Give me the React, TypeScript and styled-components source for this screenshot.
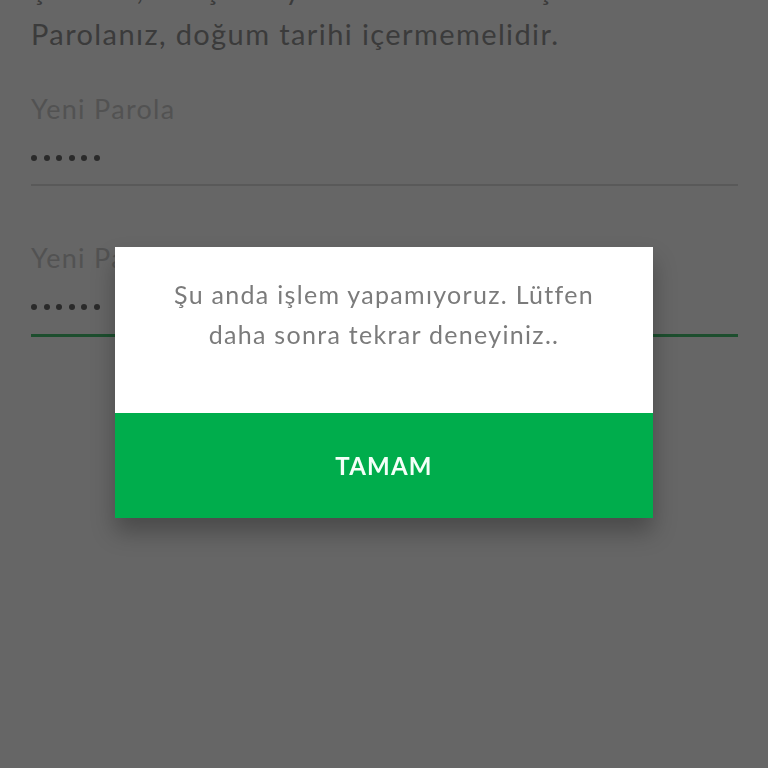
import React from 'react'
import styled, { createGlobalStyle } from 'styled-components'

const GlobalStyle = createGlobalStyle`
  html, body {
    margin: 0;
    padding: 0;
    background: #666666;
    height: 100%;
    overflow: hidden;
  }
  body {
    font-family: Lato, "Open Sans", sans-serif;
  }
`

// arka plandaki form (dialog açıkken karartılmış halde)
const Page = styled.main`
  height: 768px;
  padding: 0 30px 0 31px;
  box-sizing: border-box;
  overflow: hidden;
`

const Hint = styled.p`
  margin: -34px 0 0;
  font-size: 29px;
  line-height: 45px;
  letter-spacing: 1.4px;
  color: #3b3b3b;
`

const Field = styled.div<{ $first?: boolean }>`
  margin-top: ${(p) => (p.$first ? '38px' : '57px')};
`

const Label = styled.div`
  font-size: 27px;
  line-height: 30px;
  letter-spacing: 1.3px;
  color: #525252;
  white-space: nowrap;
`

const Dots = styled.div`
  display: flex;
  gap: 6.5px;
  height: 10px;
  align-items: center;
  margin-top: 29px;
`

const Dot = styled.span`
  width: 6px;
  height: 6px;
  border-radius: 50%;
  background: #2a2a2a;
`

const Underline = styled.div<{ $active?: boolean }>`
  margin-top: ${(p) => (p.$active ? '22px' : '21px')};
  height: ${(p) => (p.$active ? '3px' : '2px')};
  background: ${(p) => (p.$active ? '#1d4e2e' : '#595959')};
`

const Overlay = styled.div`
  position: fixed;
  inset: 0;
  padding-bottom: 4px;
  display: flex;
  align-items: center;
  justify-content: center;
`

const Dialog = styled.div`
  width: 538px;
  background: #ffffff;
  box-shadow: 0 14px 22px rgba(0, 0, 0, 0.28);
  display: flex;
  flex-direction: column;
`

const Message = styled.p`
  margin: 0;
  height: 166px;
  padding-top: 27px;
  box-sizing: border-box;
  text-align: center;
  font-size: 25px;
  line-height: 40px;
  letter-spacing: 1.3px;
  color: #7b7b7b;
`

const OkButton = styled.button`
  height: 105px;
  border: none;
  background: #00ad4c;
  color: #f4fff8;
  font-family: Lato, "Open Sans", sans-serif;
  font-weight: 700;
  font-size: 24px;
  letter-spacing: 1.2px;
  cursor: pointer;
`

const PasswordDots: React.FC = () => (
  <Dots>
    {Array.from({ length: 6 }).map((_, i) => (
      <Dot key={i} />
    ))}
  </Dots>
)

export default function App() {
  return (
    <>
      <GlobalStyle />
      <Page>
        <Hint>
          Şifreniz, ardışık veya tekrarlı rakam içermemelidir.
          <br />
          Parolanız, doğum tarihi içermemelidir.
        </Hint>
        <Field $first>
          <Label>Yeni Parola</Label>
          <PasswordDots />
          <Underline />
        </Field>
        <Field>
          <Label>Yeni Parola (Tekrar)</Label>
          <PasswordDots />
          <Underline $active />
        </Field>
      </Page>
      <Overlay>
        <Dialog>
          <Message>
            Şu anda işlem yapamıyoruz. Lütfen
            <br />
            daha sonra tekrar deneyiniz..
          </Message>
          <OkButton>TAMAM</OkButton>
        </Dialog>
      </Overlay>
    </>
  )
}
